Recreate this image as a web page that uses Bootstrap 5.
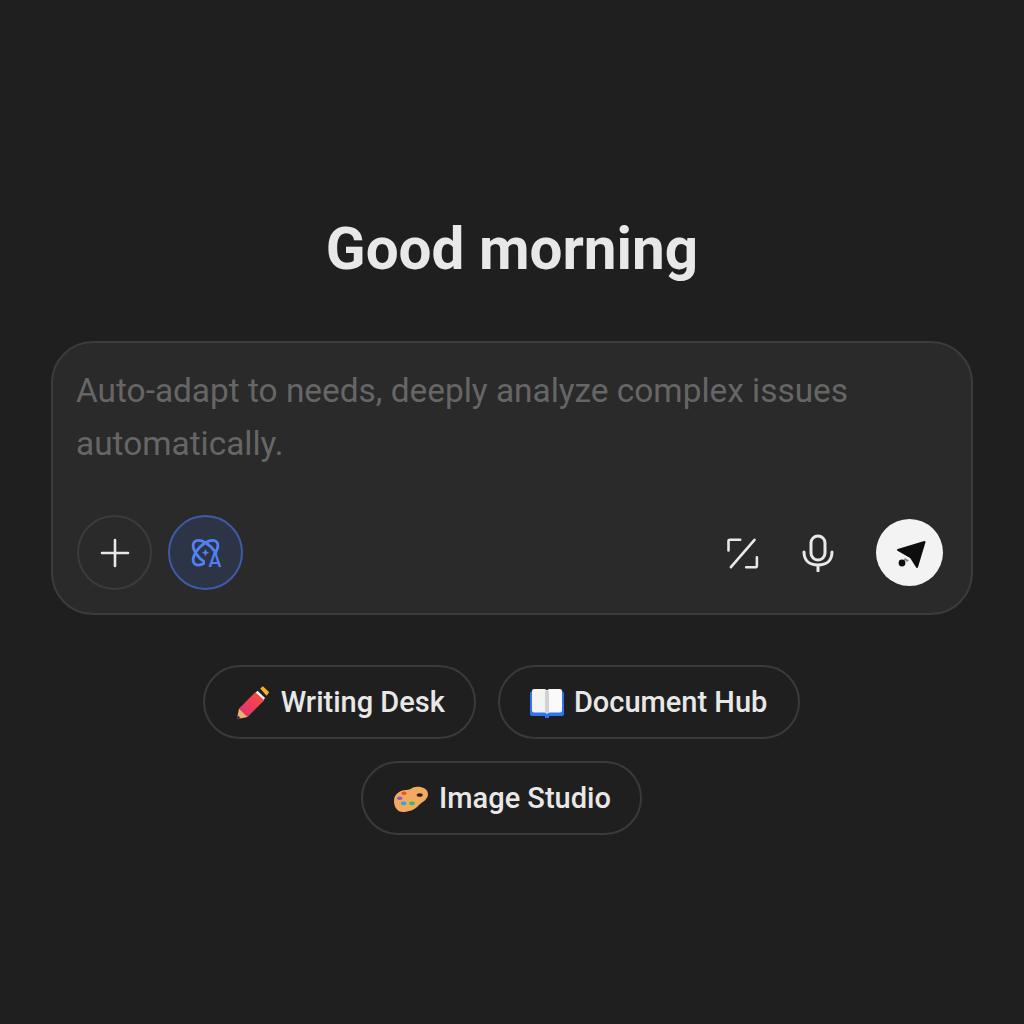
<!DOCTYPE html>
<html lang="en">
<head>
    <meta charset="UTF-8">
    <meta name="viewport" content="width=device-width, initial-scale=1.0">
    <title>Good morning</title>
    <link rel="stylesheet" href="https://cdn.jsdelivr.net/npm/bootstrap@5.3.0/dist/css/bootstrap.min.css">
    <style>
        body {
            font-family: Roboto, "Liberation Sans", sans-serif;
            background-color: #1f1f1f;
            color: #e8e8e8;
        }
        .home-page {
            height: 100vh;
            padding: 216px 51px 0;
        }
        .home-title {
            font-size: 58.4px;
            font-weight: 700;
            line-height: 66px;
            margin: 0 0 59px;
            color: #e8e8e8;
        }
        .prompt-box {
            background-color: #2a2a2a;
            border: 2px solid #3c3c3c;
            border-radius: 42px;
            height: 274px;
            padding: 21px 28px 23px 24px;
        }
        .prompt-text {
            font-size: 33.4px;
            line-height: 53px;
            color: #666;
            margin: 0 0 0 -1px;
            height: 106px;
        }
        .round-btn {
            width: 75px;
            height: 75px;
            border-radius: 50%;
            border: 2px solid #3c3c3c;
            background: transparent;
            padding: 0;
        }
        .round-btn.mode-on {
            border-color: #3d5ba9;
            background-color: #2d3446;
        }
        .plain-btn {
            width: 44px;
            height: 44px;
            border: 0;
            background: transparent;
            padding: 0;
        }
        .send-btn {
            width: 67px;
            height: 67px;
            border-radius: 50%;
            border: 0;
            background-color: #f3f3f3;
            padding: 0;
        }
        .voice-btn { margin-left: 32px; }
        .submit-gap { margin-left: 36px; }
        .shortcut-row {
            margin: 50px 0 0 120px;
            width: 661px;
            gap: 22px;
        }
        .shortcut-pill {
            height: 74px;
            border: 2px solid #3a3a3a;
            border-radius: 37px;
            background: transparent;
            color: #e8e8e8;
            font-size: 29px;
            font-weight: 500;
            padding: 1px 29px 0 30px;
            gap: 10px;
        }
        .book-icon { margin: 0 -1px; }
        .book-label { margin-right: 2px; }
        .atom-letter {
            font-family: Roboto, sans-serif;
            font-size: 19.500px;
            font-weight: 500;
            fill: #5080f5;
        }
    </style>
</head>
<body>
    <div class="home-page d-flex flex-column">
        <h1 class="home-title text-center">Good morning</h1>

        <!-- Prompt -->
        <div class="prompt-box d-flex flex-column justify-content-between">
            <p class="prompt-text">Auto-adapt to needs, deeply analyze complex issues automatically.</p>
            <div class="d-flex align-items-center">
                <button class="round-btn d-flex align-items-center justify-content-center me-3" type="button" aria-label="Add">
                    <svg width="32" height="32" viewBox="0 0 32 32" fill="none" stroke="#e8e8e8" stroke-width="2.6" stroke-linecap="round"><path d="M16 3v26M3 16h26"/></svg>
                </button>
                <button class="round-btn mode-on d-flex align-items-center justify-content-center" type="button" aria-label="Auto">
                    <svg width="36" height="40" viewBox="-1 -4 36 40">
                        <defs>
                            <mask id="atomCut" maskUnits="userSpaceOnUse" x="-1" y="-4" width="36" height="40">
                                <rect x="-1" y="-4" width="36" height="40" fill="#fff"/>
                                <rect x="16" y="17" width="19" height="19" fill="#000"/>
                                <path d="M16.500 9l6.700 6.700-6.700 6.700-6.700-6.700z" fill="#000"/>
                            </mask>
                        </defs>
                        <g fill="none" stroke="#5080f5" stroke-width="2.800" mask="url(#atomCut)">
                            <ellipse cx="16.500" cy="15.700" rx="15.500" ry="8" transform="rotate(45 16.500 15.700)"/>
                            <ellipse cx="16.500" cy="15.700" rx="15.500" ry="8" transform="rotate(-45 16.500 15.700)"/>
                        </g>
                        <path d="M16.500 12l1.100 2.600 2.600 1.100-2.600 1.100-1.100 2.600-1.100-2.600-2.600-1.100 2.600-1.100z" fill="#5080f5"/>
                        <text class="atom-letter" x="19.500" y="30">A</text>
                    </svg>
                </button>
                <div class="d-flex align-items-center ms-auto">
                    <button class="plain-btn d-flex align-items-center justify-content-center" type="button" aria-label="Ratio">
                        <svg width="34" height="34" viewBox="-0.7 0 34 34" fill="none" stroke="#e8e8e8" stroke-width="2.600" stroke-linecap="round" stroke-linejoin="round"><path d="M14.500 3.800H4.300a1.500 1.500 0 0 0-1.500 1.500V14.500M20.500 31.200h9.200a1.500 1.500 0 0 0 1.500-1.500V21.200M28.800 3.800L5.200 31.200"/></svg>
                    </button>
                    <button class="plain-btn voice-btn d-flex align-items-center justify-content-center" type="button" aria-label="Voice">
                        <svg width="34" height="38" viewBox="0 0 34 38" fill="none" stroke="#e8e8e8" stroke-width="3" stroke-linecap="round"><rect x="10" y="2" width="14" height="24" rx="7"/><path d="M3 18c0 9 6 13 14 13s14-4 14-13M17 31v6"/></svg>
                    </button>
                    <button class="send-btn submit-gap d-flex align-items-center justify-content-center" type="button" aria-label="Send">
                        <svg width="32" height="32" viewBox="0 0 32 32"><path d="M30.500 5L23 30l-6-9.500L4 13z" fill="#0d0d0d" stroke="#0d0d0d" stroke-width="2" stroke-linejoin="round"/><circle cx="8" cy="26" r="3.400" fill="#0d0d0d"/><path d="M11 21l4 2.500-2 1.500-3.200-2.600z" fill="#8a8a8a"/></svg>
                    </button>
                </div>
            </div>
        </div>

        <!-- Shortcuts -->
        <div class="shortcut-row d-flex flex-wrap justify-content-center">
            <button class="shortcut-pill d-flex align-items-center" type="button">
                <svg width="36" height="36" viewBox="-2 -2 40 40"><defs><linearGradient id="pencilFill" x1="0" y1="1" x2="1" y2="0"><stop offset="0" stop-color="#e02f78"/><stop offset="1" stop-color="#f8503a"/></linearGradient></defs><path d="M23 4.500l8.500 8-2 2.500-9-8z" fill="#f5f0e8"/><path d="M26 2l3-2.500 7 6.500-3 4z" fill="#f6b21c"/><path d="M20.500 6l10 9L12 33.500 2.500 24z" fill="url(#pencilFill)"/><path d="M2.500 24l9.500 9.500L0 36z" fill="#f0b070"/><path d="M1 31.500l3.500 3.500L0 36z" fill="#3a2a4a"/></svg>
                <span>Writing Desk</span>
            </button>
            <button class="shortcut-pill d-flex align-items-center" type="button">
                <svg class="book-icon" width="36" height="30" viewBox="0 0 36 30"><path d="M1 6a3 3 0 0 1 3-3h28a3 3 0 0 1 3 3v20a2 2 0 0 1-2 2H3a2 2 0 0 1-2-2z" fill="#2f74f5"/><path d="M3 3a2 2 0 0 1 2-2h10c2 0 3 1 3 2v23c-1-1-2-1.500-4-1.500H5a2 2 0 0 1-2-2z" fill="#f4f4f4"/><path d="M33 3a2 2 0 0 0-2-2H21c-2 0-3 1-3 2v23c1-1 2-1.500 4-1.500h9a2 2 0 0 0 2-2z" fill="#fafafa"/><path d="M16 3h4v22h-4z" fill="#d2d2d2"/><path d="M16 28h4v2h-4z" fill="#2f74f5"/></svg>
                <span class="book-label">Document Hub</span>
            </button>
            <button class="shortcut-pill d-flex align-items-center" type="button">
                <svg width="36" height="28" viewBox="0 0 36 28"><path d="M1 16C1 9 7 5 13 5c3 0 5-1 7-2.500C25 .5 35 2 35 9c0 6-6 8-9 11-4 5-11 7-16 7C4 27 1 22 1 16z" fill="#f2a960"/><ellipse cx="26.700" cy="10" rx="3" ry="1.800" fill="#2a2018"/><ellipse cx="11" cy="8.300" rx="2.600" ry="1.700" fill="#f2501e"/><ellipse cx="6.700" cy="13.300" rx="2.800" ry="1.800" fill="#7f5cd8"/><ellipse cx="10.700" cy="18.300" rx="2.800" ry="1.900" fill="#2aa5f0"/><ellipse cx="19" cy="18.300" rx="2.800" ry="1.900" fill="#25c068"/></svg>
                <span>Image Studio</span>
            </button>
        </div>
    </div>
    <script src="https://cdn.jsdelivr.net/npm/bootstrap@5.3.0/dist/js/bootstrap.bundle.min.js"></script>
</body>
</html>
